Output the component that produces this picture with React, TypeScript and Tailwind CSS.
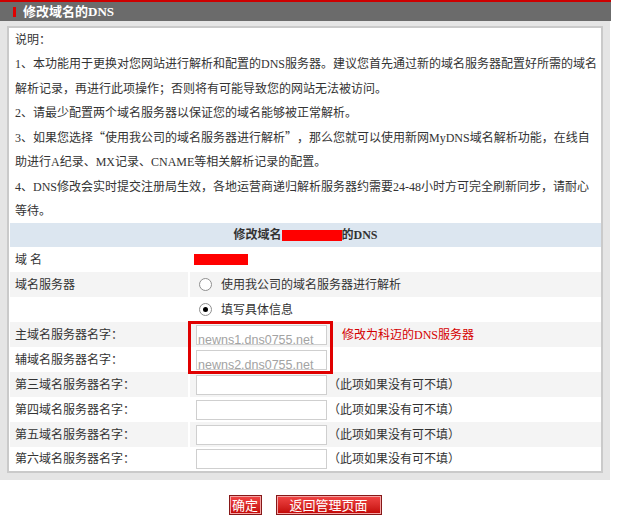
import React from 'react';

const serif = { fontFamily: '"Liberation Serif", "Noto Sans CJK SC", serif' };
const sans = { fontFamily: '"Liberation Sans", Arial, sans-serif' };
const cjk = { fontFamily: '"Noto Sans CJK SC", sans-serif' };

function Radio({ checked }: { checked?: boolean }) {
  return (
    <span className="w-[13px] h-[13px] rounded-full border border-[#8f8f8f] bg-white flex items-center justify-center shrink-0">
      {checked && <span className="w-[5px] h-[5px] rounded-full bg-black" />}
    </span>
  );
}

function FakeInput({ value }: { value?: string }) {
  return (
    <div className="w-[131px] h-[20px] border border-[#cfcfcf] bg-white overflow-hidden shrink-0">
      {value && (
        <div className="pl-[1px] pt-[7px] leading-[14px] text-[12.5px] text-[#a3a3a3] whitespace-nowrap" style={sans}>
          {value}
        </div>
      )}
    </div>
  );
}

function Row({ gray, label, children, h = 'h-[25px]' }: { gray?: boolean; label: string; children?: React.ReactNode; h?: string }) {
  const bg = gray ? 'bg-[#f4f4f4]' : 'bg-white';
  return (
    <div className={`flex ${h}`}>
      <div className={`w-[178px] shrink-0 ${bg} pl-[5px] flex items-center whitespace-pre`}>{label}</div>
      <div className={`flex-1 ml-[2px] ${bg} flex items-center`}>{children}</div>
    </div>
  );
}

export default function App() {
  const optional = ['第三', '第四', '第五', '第六'];

  return (
    <div className="w-[627px] h-[528px] bg-white text-[12px] text-[#333]" style={serif}>
      <div className="w-[611px]">
        <div className="h-[2px] bg-[#cc0000]" />
        <div className="h-[19px] bg-[#6b6b6b] flex items-center pl-[13px]">
          <span className="w-[3px] h-[10px] bg-[#e00000] mr-[7px]" />
          <span className="text-white font-bold text-[13px] leading-none">修改域名的DNS</span>
        </div>
      </div>

      <div className="w-[610px] bg-[#e5e5e5] px-[7px] pt-[5px] pb-[7px]">
        <div className="border-2 border-[#cacaca] bg-white">
          <div className="pl-[6px] leading-[24.25px] whitespace-nowrap">
            <div>说明：</div>
            <div>1、本功能用于更换对您网站进行解析和配置的DNS服务器。建议您首先通过新的域名服务器配置好所需的域名</div>
            <div>解析记录，再进行此项操作；否则将有可能导致您的网站无法被访问。</div>
            <div>2、请最少配置两个域名服务器以保证您的域名能够被正常解析。</div>
            <div>
              3、如果您选择<span className="inline-block w-[12px] text-right" style={cjk}>“</span>使用我公司的域名服务器进行解析<span className="inline-block w-[12px] text-left" style={cjk}>”</span>，那么您就可以使用新网MyDNS域名解析功能，在线自
            </div>
            <div>助进行A纪录、MX记录、CNAME等相关解析记录的配置。</div>
            <div>4、DNS修改会实时提交注册局生效，各地运营商递归解析服务器约需要24-48小时方可完全刷新同步，请耐心</div>
            <div>等待。</div>
          </div>

          <div className="relative ml-[1px]">
            <div className="h-[24px] bg-[#dce6f0] flex items-center justify-center font-bold text-[12px]">
              <span>修改域名</span>
              <span className="w-[60px] h-[11px] bg-[#ff0000]" />
              <span>的DNS</span>
            </div>

            <Row label="域 名">
              <span className="ml-[4px] w-[54px] h-[11px] bg-[#ff0000]" />
            </Row>
            <Row gray label="域名服务器">
              <div className="pl-[9px] flex items-center gap-[9px]">
                <Radio />
                <span>使用我公司的域名服务器进行解析</span>
              </div>
            </Row>
            <Row label="">
              <div className="pl-[9px] flex items-center gap-[9px]">
                <Radio checked />
                <span>填写具体信息</span>
              </div>
            </Row>
            <Row gray label="主域名服务器名字：">
              <div className="pl-[6px] flex items-center">
                <FakeInput value="newns1.dns0755.net" />
                <span className="ml-[15px] text-[#d40000]">修改为科迈的DNS服务器</span>
              </div>
            </Row>
            <Row label="辅域名服务器名字：">
              <div className="pl-[6px] flex items-center">
                <FakeInput value="newns2.dns0755.net" />
              </div>
            </Row>
            {optional.map((n, i) => (
              <Row key={n} gray={i % 2 === 0} label={`${n}域名服务器名字：`} h={i === 3 ? 'h-[24px]' : 'h-[25px]'}>
                <div className="pl-[6px] flex items-center">
                  <FakeInput />
                  <span className="ml-[1px]">（此项如果没有可不填）</span>
                </div>
              </Row>
            ))}

            {/* annotation box drawn over the two main inputs */}
            <div className="absolute left-[178px] top-[98px] w-[145px] h-[53px] border-[3px] border-[#e00000] pointer-events-none" />
          </div>
        </div>
      </div>

      <div className="w-[610px] flex justify-center gap-[14px] mt-[15px]">
        <button className="h-[20px] w-[33px] border border-[#861818] shadow-[inset_0_0_0_1px_#f5a5a5] bg-gradient-to-b from-[#f24444] to-[#c20000] text-white text-[13px] leading-none flex items-center justify-center">
          确定
        </button>
        <button className="h-[20px] w-[106px] border border-[#861818] shadow-[inset_0_0_0_1px_#f5a5a5] bg-gradient-to-b from-[#f24444] to-[#c20000] text-white text-[13px] leading-none flex items-center justify-center">
          返回管理页面
        </button>
      </div>
    </div>
  );
}
